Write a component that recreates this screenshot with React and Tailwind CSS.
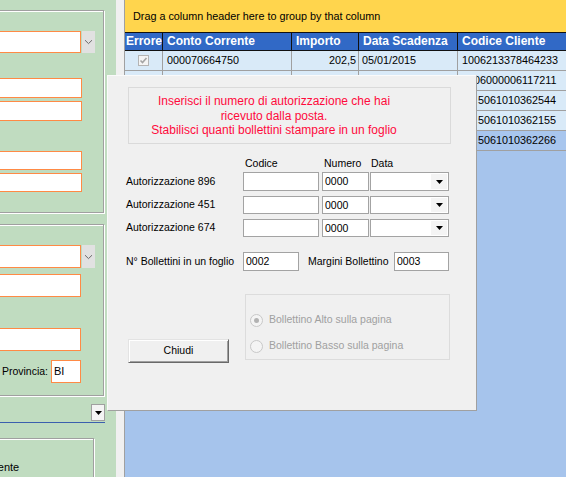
import React from "react";

const rows = [
  { cc: "000070664750", imp: "202,5", data: "05/01/2015", cod: "1006213378464233" },
  { cc: "000012884409", imp: "118,3", data: "05/01/2015", cod: "1006000006117211" },
  { cc: "000045120077", imp: "96,4", data: "05/01/2015", cod: "5061010362544", right: true },
  { cc: "000045120081", imp: "74,9", data: "05/01/2015", cod: "5061010362155", right: true },
  { cc: "000045120093", imp: "51,2", data: "05/01/2015", cod: "5061010362266", right: true, sel: true },
];

function Chevron() {
  return (
    <svg width="9" height="6" viewBox="0 0 9 6">
      <path d="M1 1.2l3.5 3.4L8 1.2" fill="none" stroke="#6b6b6b" strokeWidth="1" />
    </svg>
  );
}

function Tri() {
  return (
    <svg width="7" height="4" viewBox="0 0 7 4">
      <polygon points="0,0 7,0 3.5,4" fill="#000" />
    </svg>
  );
}

function CheckBox() {
  return (
    <div className="w-[11px] h-[11px] border border-[#b4b4b4] bg-[#f4f4f4] flex items-center justify-center">
      <svg width="9" height="9" viewBox="0 0 9 9">
        <path d="M1.5 4.5l2 2L7.5 2" fill="none" stroke="#a4a4a4" strokeWidth="1.6" />
      </svg>
    </div>
  );
}

function LeftSelect({ className }) {
  return (
    <div className={"flex " + className}>
      <div className="w-[100px] h-full bg-white border border-[#ff8a45]" />
      <div className="ml-[1px] w-[13px] h-full bg-[#e1e1e1] flex items-center justify-center">
        <Chevron />
      </div>
    </div>
  );
}

function LeftPanel() {
  return (
    <div className="w-[116px] h-full bg-[#c0dcc0] overflow-hidden shrink-0">
      {/* group 1 */}
      <div className="-ml-[20px] mt-[10px] w-[124px] h-[203px] border border-[#a0a0a0] shadow-[1px_1px_0_#fff,inset_1px_1px_0_#fff]">
        <LeftSelect className="mt-[20px] h-[22px]" />
        <div className="mt-[25px] w-[101px] h-[20px] bg-white border border-[#ff8a45]" />
        <div className="mt-[3px] w-[101px] h-[20px] bg-white border border-[#ff8a45]" />
        <div className="mt-[30px] w-[101px] h-[19px] bg-white border border-[#ff8a45]" />
        <div className="mt-[3px] w-[101px] h-[19px] bg-white border border-[#ff8a45]" />
      </div>

      {/* group 2 */}
      <div className="-ml-[20px] mt-[11px] w-[124px] h-[172px] border border-[#a0a0a0] shadow-[1px_1px_0_#fff,inset_1px_1px_0_#fff]">
        <LeftSelect className="mt-[20px] h-[23px]" />
        <div className="mt-[6px] w-[100px] h-[23px] bg-white border border-[#ff8a45]" />
        <div className="mt-[31px] w-[100px] h-[23px] bg-white border border-[#ff8a45]" />
        <div className="mt-[9px] w-[100px] h-[23px] flex items-center justify-end gap-[3px]">
          <span className="text-[10.5px] leading-none text-black">Provincia:</span>
          <div className="w-[30px] h-full bg-white border border-[#ff8a45] pl-[2px] pt-[3px] text-[11px] leading-[14px]">BI</div>
        </div>
      </div>

      {/* combo */}
      <div className="mt-[8px] w-[105px] h-[19px] flex justify-end border-b border-[#3b5fae]">
        <div className="w-[14px] h-[17px] bg-[#f4f4f4] border border-[#a0a0a0] flex items-center justify-center">
          <Tri />
        </div>
      </div>

      {/* group 3 */}
      <div className="-ml-[20px] mt-[15px] w-[114px] h-[60px] border border-[#a0a0a0] shadow-[1px_1px_0_#fff,inset_1px_1px_0_#fff]">
        <div className="mt-[21px] ml-[4px] text-[11px] leading-[14px] whitespace-nowrap">Cliente</div>
      </div>
    </div>
  );
}

function Grid() {
  return (
    <div className="flex-1 h-full border-l border-[#a0a0a0] bg-[#a6c4ec] overflow-hidden text-[10.8px]">
      <div className="h-[32px] bg-[#ffd54d] flex items-center pl-[8px] text-black whitespace-nowrap">
        Drag a column header here to group by that column
      </div>
      <div className="h-[19px] grid grid-cols-[38px_129px_67px_99px_140px] bg-[#3169c6] border-y border-[#111] text-white font-bold text-[12px] leading-[17px] whitespace-nowrap">
        <div className="border-r border-[#111] pl-[1px] overflow-hidden">Errore</div>
        <div className="border-r border-[#111] pl-[4px]">Conto Corrente</div>
        <div className="border-r border-[#111] pl-[4px]">Importo</div>
        <div className="border-r border-[#111] pl-[4px]">Data Scadenza</div>
        <div className="pl-[4px]">Codice Cliente</div>
      </div>
      {rows.map((r, i) => (
        <div
          key={i}
          className={
            "h-[20px] grid grid-cols-[38px_129px_67px_99px_140px] border-b border-[#a0a0a0] leading-[19px] whitespace-nowrap " +
            (r.sel ? "bg-[#a8c6ee]" : "bg-[#d9eaf8]")
          }
        >
          <div className="border-r border-[#a0a0a0] flex items-center justify-center">
            <CheckBox />
          </div>
          <div className="border-r border-[#a0a0a0] pl-[4px]">{r.cc}</div>
          <div className="border-r border-[#a0a0a0] pr-[2px] text-right">{r.imp}</div>
          <div className="border-r border-[#a0a0a0] pl-[3px]">{r.data}</div>
          <div className={r.right ? "pr-[42px] text-right" : "pl-[4px]"}>{r.cod}</div>
        </div>
      ))}
    </div>
  );
}

function Input({ className, children }) {
  return (
    <div className={"h-full bg-white border border-[#a3a3a3] pl-[2px] leading-[16px] " + className}>
      {children}
    </div>
  );
}

function DateSelect() {
  return (
    <div className="ml-[1px] w-[79px] h-full bg-white border border-[#a3a3a3] flex justify-end p-[1px]">
      <div className="w-[16px] h-full bg-[#f4f4f4] flex items-center justify-center">
        <Tri />
      </div>
    </div>
  );
}

function AuthRow({ label, className }) {
  return (
    <div className={"flex items-center " + className}>
      <div className="w-[117px]">{label}</div>
      <Input className="w-[76px]" />
      <Input className="ml-[3px] w-[47px]">0000</Input>
      <DateSelect />
    </div>
  );
}

function Radio({ checked, label, className }) {
  return (
    <div className={"flex items-center h-[14px] " + className}>
      <div className="w-[13px] h-[13px] rounded-full border border-[#c8c8c8] bg-[#f4f4f4] flex items-center justify-center">
        {checked && <div className="w-[5px] h-[5px] rounded-full bg-[#b2b2b2]" />}
      </div>
      <span className="ml-[6px] text-[#a0a0a0] whitespace-nowrap">{label}</span>
    </div>
  );
}

function Dialog() {
  return (
    <div className="absolute left-[107px] top-[75px] w-[370px] h-[336px] bg-[#f0f0f0] border border-t-[#fafafa] border-l-[#fafafa] border-r-[#a0a0a0] border-b-[#a0a0a0] pl-[18px] pt-[11px] text-[10.5px] text-black">
      <div className="ml-[2px] w-[323px] h-[57px] border border-[#dadada]">
        <div className="w-[290px] pt-[6px] text-center text-[12px] leading-[14.5px] text-[#ff0a3c] whitespace-nowrap">
          Inserisci il numero di autorizzazione che hai
          <br />
          ricevuto dalla posta.
          <br />
          Stabilisci quanti bollettini stampare in un foglio
        </div>
      </div>

      <div className="mt-[12px] h-[14px] flex leading-[14px]">
        <div className="w-[117px]" />
        <div className="w-[79px] pl-[2px]">Codice</div>
        <div className="w-[48px] pl-[2px]">Numero</div>
        <div className="pl-[1px]">Data</div>
      </div>

      <AuthRow label="Autorizzazione 896" className="mt-[2px] h-[19px]" />
      <AuthRow label="Autorizzazione 451" className="mt-[5px] h-[18px]" />
      <AuthRow label="Autorizzazione 674" className="mt-[5px] h-[18px]" />

      <div className="mt-[15px] h-[19px] flex items-center">
        <div className="w-[117px] whitespace-nowrap">N° Bollettini in un foglio</div>
        <Input className="w-[56px]">0002</Input>
        <div className="ml-[9px] w-[86px] whitespace-nowrap">Margini Bollettino</div>
        <Input className="w-[55px]">0003</Input>
      </div>

      <div className="mt-[23px] flex items-start">
        <button className="ml-[2px] mt-[45px] w-[101px] h-[24px] bg-[#f0f0f0] border border-t-[#e3e3e3] border-l-[#e3e3e3] border-r-[#696969] border-b-[#696969] shadow-[inset_1px_1px_0_#fff,inset_-1px_-1px_0_#a0a0a0] text-[10.5px] text-black">
          Chiudi
        </button>
        <div className="ml-[16px] w-[205px] h-[66px] border border-[#dcdcdc] pl-[4px] pt-[18px]">
          <Radio checked label="Bollettino Alto sulla pagina" />
          <Radio label="Bollettino Basso sulla pagina" className="mt-[12px]" />
        </div>
      </div>
    </div>
  );
}

export default function App() {
  return (
    <div className="relative w-[566px] h-[477px] overflow-hidden flex font-['Liberation_Sans',Arial,sans-serif] text-black">
      <LeftPanel />
      <div className="w-[8px] h-full bg-[#f0f0f0] shrink-0" />
      <Grid />
      <Dialog />
    </div>
  );
}
